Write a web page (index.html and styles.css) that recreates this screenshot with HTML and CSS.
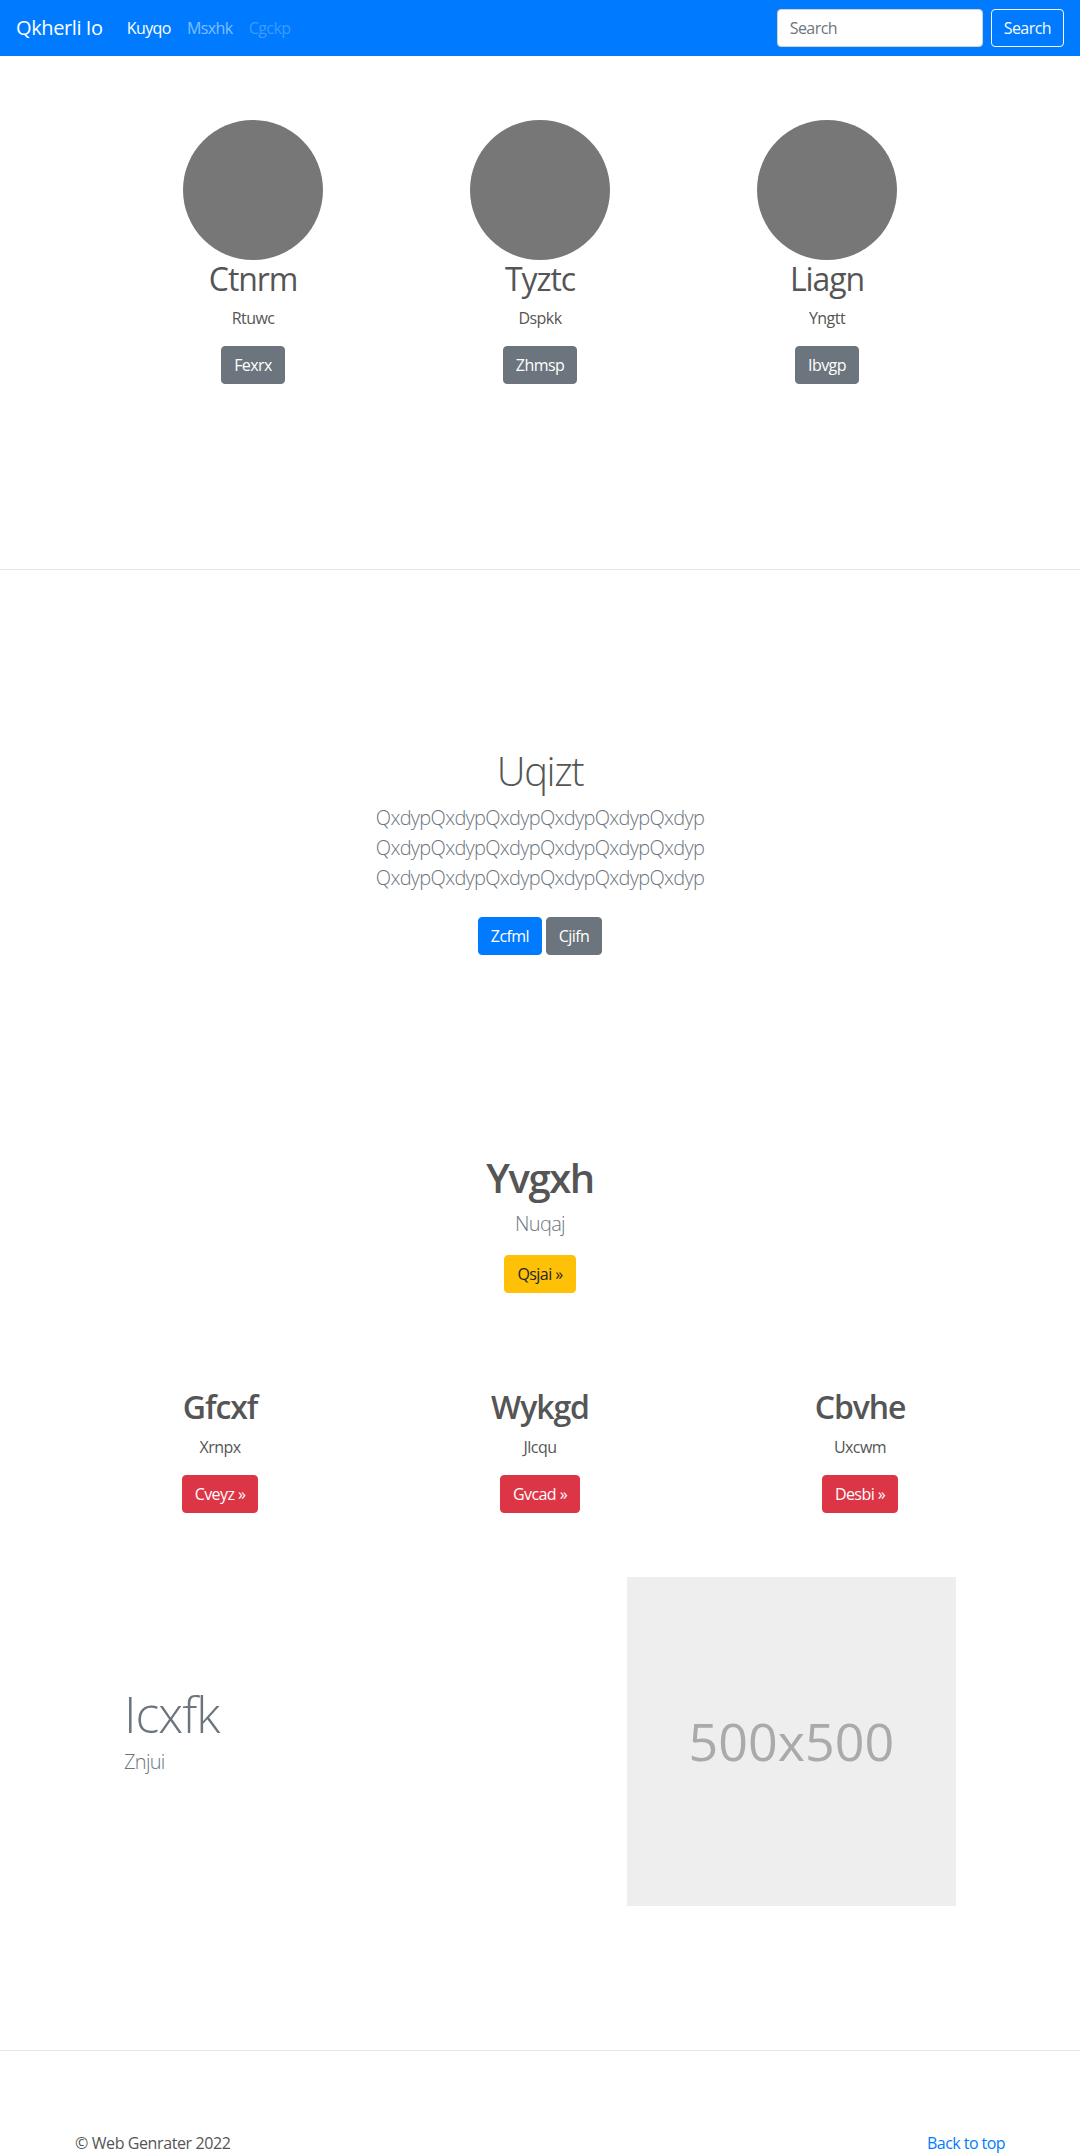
FILE: index.html
```html
<!DOCTYPE html>
<html lang="en">
<head>
<meta charset="utf-8">
<title>Qkherli Io</title>
<link rel="stylesheet" href="styles.css">
</head>
<body>
<header class="navbar">
  <a class="brand" href="#">Qkherli Io</a>
  <ul class="nav">
    <li><a class="nav-link active" href="#">Kuyqo</a></li>
    <li><a class="nav-link" href="#">Msxhk</a></li>
    <li><a class="nav-link disabled" href="#">Cgckp</a></li>
  </ul>
  <form class="search">
    <input class="search-input" type="text" placeholder="Search">
    <button class="btn btn-outline-light" type="button">Search</button>
  </form>
</header>

<main>
  <section class="team">
    <div class="team-row">
      <div class="member">
        <div class="avatar"></div>
        <h2 class="member-name">Ctnrm</h2>
        <p class="member-text">Rtuwc</p>
        <a class="btn btn-secondary" href="#">Fexrx</a>
      </div>
      <div class="member">
        <div class="avatar"></div>
        <h2 class="member-name">Tyztc</h2>
        <p class="member-text">Dspkk</p>
        <a class="btn btn-secondary" href="#">Zhmsp</a>
      </div>
      <div class="member">
        <div class="avatar"></div>
        <h2 class="member-name">Liagn</h2>
        <p class="member-text">Yngtt</p>
        <a class="btn btn-secondary" href="#">Ibvgp</a>
      </div>
    </div>
  </section>

  <hr class="divider">

  <section class="jumbo">
    <h1 class="jumbo-heading">Uqizt</h1>
    <p class="lead muted">QxdypQxdypQxdypQxdypQxdypQxdyp<br>QxdypQxdypQxdypQxdypQxdypQxdyp<br>QxdypQxdypQxdypQxdypQxdypQxdyp</p>
    <p class="jumbo-actions">
      <a class="btn btn-primary" href="#">Zcfml</a>
      <a class="btn btn-secondary" href="#">Cjifn</a>
    </p>
  </section>

  <section class="cta">
    <h1 class="cta-heading">Yvgxh</h1>
    <p class="lead cta-lead">Nuqaj</p>
    <a class="btn btn-warning" href="#">Qsjai &raquo;</a>
  </section>

  <section class="features">
    <div class="feature">
      <h2 class="feature-title">Gfcxf</h2>
      <p class="feature-text">Xrnpx</p>
      <a class="btn btn-danger" href="#">Cveyz &raquo;</a>
    </div>
    <div class="feature">
      <h2 class="feature-title">Wykgd</h2>
      <p class="feature-text">Jlcqu</p>
      <a class="btn btn-danger" href="#">Gvcad &raquo;</a>
    </div>
    <div class="feature">
      <h2 class="feature-title">Cbvhe</h2>
      <p class="feature-text">Uxcwm</p>
      <a class="btn btn-danger" href="#">Desbi &raquo;</a>
    </div>
  </section>

  <section class="featurette">
    <div class="featurette-text">
      <h2 class="featurette-heading">Icxfk</h2>
      <p class="lead featurette-lead">Znjui</p>
    </div>
    <div class="featurette-media">
      <div class="placeholder"><span>500x500</span></div>
    </div>
  </section>

  <hr class="divider divider-bottom">
</main>

<footer class="footer">
  <p class="copyright">&copy; Web Genrater 2022</p>
  <a class="back-top" href="#">Back to top</a>
</footer>
</body>
</html>
```

FILE: styles.css
```css
* {
  box-sizing: border-box;
}

body {
  margin: 0;
  font-family: "Open Sans", "Noto Sans", "Liberation Sans", sans-serif;
  font-size: 16px;
  line-height: 1.5;
  color: #555;
  background: #fff;
}

a {
  text-decoration: none;
}

/* slightly tighter tracking to approximate the original UI font widths */
h1, h2, p, .nav-link, .btn, .back-top, .search-input {
  letter-spacing: -0.035em;
}

/* ---------- navbar ---------- */
.navbar {
  height: 56px;
  display: flex;
  align-items: center;
  padding: 8px 16px;
  background: #007bff;
}

.brand {
  font-size: 20px;
  line-height: 30px;
  padding: 5px 0;
  margin-right: 16px;
  letter-spacing: -0.02em;
  color: #fff;
}

.nav {
  display: flex;
  list-style: none;
  margin: 0;
  padding: 0;
}

.nav-link {
  display: block;
  padding: 8px;
  line-height: 24px;
  color: rgba(255, 255, 255, 0.5);
}

.nav-link.active {
  color: #fff;
}

.nav-link.disabled {
  color: rgba(255, 255, 255, 0.25);
}

.search {
  margin-left: auto;
  display: flex;
  align-items: center;
  gap: 8px;
}

.search-input {
  width: 206px;
  height: 38px;
  padding: 6px 12px;
  font: inherit;
  font-size: 16px;
  color: #495057;
  background: #fff;
  border: 1px solid #ced4da;
  border-radius: 4px;
}

.search-input::placeholder {
  color: #6c757d;
}

/* ---------- buttons ---------- */
.btn {
  display: inline-block;
  padding: 6px 12px;
  font-family: inherit;
  font-size: 16px;
  line-height: 24px;
  border: 1px solid transparent;
  border-radius: 4px;
  text-align: center;
  vertical-align: middle;
  cursor: pointer;
}

.btn-outline-light {
  color: #f8f9fa;
  background: transparent;
  border-color: #f8f9fa;
}

.btn-secondary {
  color: #fff;
  background: #6c757d;
  border-color: #6c757d;
}

.btn-primary {
  color: #fff;
  background: #007bff;
  border-color: #007bff;
}

.btn-warning {
  color: #212529;
  background: #ffc107;
  border-color: #ffc107;
}

.btn-danger {
  color: #fff;
  background: #dc3545;
  border-color: #dc3545;
}

/* ---------- team ---------- */
.team {
  padding: 64px 0 185px;
}

.team-row {
  width: 861px;
  margin: 0 auto;
  display: grid;
  grid-template-columns: repeat(3, 1fr);
}

.member {
  text-align: center;
}

.avatar {
  width: 140px;
  height: 140px;
  margin: 0 auto;
  border-radius: 50%;
  background: #777;
}

.member-name {
  margin: 0 0 8px;
  font-size: 32px;
  line-height: 38.4px;
  font-weight: 400;
  color: #555;
}

.member-text {
  margin: 0 0 16px;
}

/* ---------- dividers ---------- */
.divider {
  margin: 0;
  border: 0;
  border-top: 1px solid #e5e5e5;
}

/* ---------- jumbotron ---------- */
.jumbo {
  padding-top: 177px;
  text-align: center;
}

.jumbo-heading {
  margin: 0 0 8px;
  font-size: 40px;
  line-height: 48px;
  font-weight: 300;
  color: #555;
}

.lead {
  font-size: 20px;
  line-height: 30px;
  font-weight: 300;
}

.muted {
  color: #6c757d;
  margin: 0 0 16px;
}

.jumbo-actions {
  margin: 0;
}

.jumbo-actions .btn {
  margin: 8px 0;
}

/* ---------- cta ---------- */
.cta {
  padding-top: 191px;
  text-align: center;
}

.cta-heading {
  margin: 0 0 7px;
  font-size: 40px;
  line-height: 48px;
  font-weight: 600;
  color: #555;
}

.cta-lead {
  margin: 0 0 16px;
  color: #6c757d;
}

/* ---------- features ---------- */
.features {
  width: 960px;
  margin: 0 auto;
  padding-top: 95px;
  display: grid;
  grid-template-columns: repeat(3, 1fr);
  text-align: center;
}

.feature-title {
  margin: 0 0 8px;
  font-size: 32px;
  line-height: 38.4px;
  font-weight: 600;
  color: #555;
}

.feature-text {
  margin: 0 0 16px;
}

/* ---------- featurette ---------- */
.featurette {
  width: 862px;
  margin: 64px auto 0;
  display: grid;
  grid-template-columns: 7fr 5fr;
  align-items: center;
}

.featurette-text {
  padding: 0 15px;
}

.featurette-heading {
  margin: 0 0 8px;
  font-size: 50px;
  line-height: 1;
  font-weight: 300;
  letter-spacing: -0.02em;
  color: #6c757d;
}

.featurette-lead {
  margin: 0 0 16px;
  color: #6c757d;
}

.featurette-media {
  padding: 0 15px;
}

.placeholder {
  height: 329px;
  display: flex;
  align-items: center;
  justify-content: center;
  background: #eee;
  color: #aaa;
  font-size: 52px;
}

.divider-bottom {
  margin-top: 144px;
}

/* ---------- footer ---------- */
.footer {
  width: 960px;
  margin: 0 auto;
  padding: 80px 15px 0;
  display: flex;
  justify-content: space-between;
}

.copyright {
  margin: 0 0 16px;
  letter-spacing: -0.4px;
}

.back-top {
  color: #007bff;
}
```
